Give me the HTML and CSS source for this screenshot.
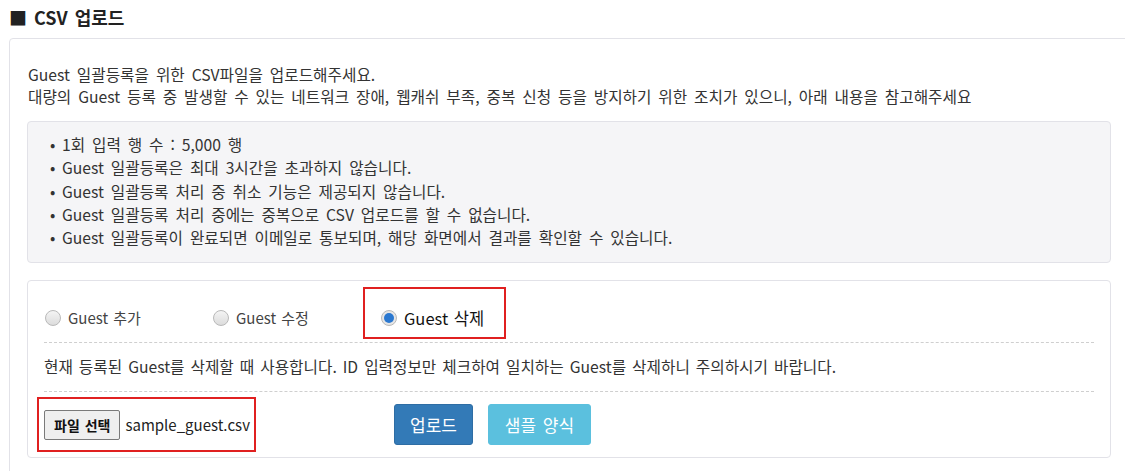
FILE: index.html
```html
<!DOCTYPE html>
<html lang="ko">
<head>
<meta charset="utf-8">
<title>CSV 업로드</title>
<link rel="stylesheet" href="styles.css">
</head>
<body>
<div class="page">
  <h2 class="title">■ CSV 업로드</h2>
  <div class="panel">
    <p class="intro">Guest 일괄등록을 위한 CSV파일을 업로드해주세요.<br>대량의 Guest 등록 중 발생할 수 있는 네트워크 장애, 웹캐쉬 부족, 중복 신청 등을 방지하기 위한 조치가 있으니, 아래 내용을 참고해주세요</p>
    <ul class="notice">
      <li>1회 입력 행 수 : 5,000 행</li>
      <li>Guest 일괄등록은 최대 3시간을 초과하지 않습니다.</li>
      <li>Guest 일괄등록 처리 중 취소 기능은 제공되지 않습니다.</li>
      <li>Guest 일괄등록 처리 중에는 중복으로 CSV 업로드를 할 수 없습니다.</li>
      <li>Guest 일괄등록이 완료되면 이메일로 통보되며, 해당 화면에서 결과를 확인할 수 있습니다.</li>
    </ul>
    <div class="form-box">
      <div class="radio-row">
        <label class="option"><span class="radio"></span>Guest 추가</label>
        <label class="option"><span class="radio"></span>Guest 수정</label>
        <label class="option selected marked"><span class="radio checked"></span>Guest 삭제</label>
      </div>
      <div class="desc">현재 등록된 Guest를 삭제할 때 사용합니다. ID 입력정보만 체크하여 일치하는 Guest를 삭제하니 주의하시기 바랍니다.</div>
      <div class="action-row">
        <div class="file-group">
          <div class="file marked"><span class="file-btn">파일 선택</span><span class="file-name">sample_guest.csv</span></div>
        </div>
        <button class="btn btn-primary">업로드</button>
        <button class="btn btn-info">샘플 양식</button>
      </div>
    </div>
  </div>
</div>
</body>
</html>
```

FILE: styles.css
```css
html, body {
  margin: 0;
  padding: 0;
  background: #fff;
  overflow: hidden;
}
body {
  font-family: "Noto Sans CJK KR", "Noto Sans", sans-serif;
  color: #333;
  font-size: 15.7px;
  word-spacing: 2.5px;
}
.page {
  width: 1125px;
  height: 471px;
  padding-left: 9px;
  box-sizing: border-box;
  overflow: hidden;
}
.title {
  margin: 0;
  height: 38px;
  line-height: 34px;
  font-size: 18px;
  font-weight: bold;
  color: #222;
  word-spacing: 2px;
}
.panel {
  width: 1120px;
  border: 1px solid #e2e2e8;
  border-radius: 4px;
  padding: 25px 18px 20px 17px;
  box-sizing: border-box;
  min-height: 460px;
}
.intro {
  margin: 0 0 13px 1px;
  line-height: 22px;
}
.notice {
  list-style: none;
  margin: 0;
  padding: 11px 0 13px 22px;
  background: #f5f5f7;
  border: 1px solid #e2e2e8;
  border-radius: 4px;
  line-height: 23.3px;
  width: 1084px;
  box-sizing: border-box;
}
.notice li::before {
  content: "•";
  display: inline-block;
  width: 12px;
}
.form-box {
  margin-top: 17px;
  width: 1084px;
  box-sizing: border-box;
  border: 1px solid #e2e2e8;
  border-radius: 4px;
  padding: 0 16px;
}
.radio-row {
  display: flex;
  align-items: center;
  padding: 26px 0 13px 1px;
  height: 22px;
  border-bottom: 1px dashed #cfcfcf;
}
.option {
  flex: none;
  width: 168px;
  display: flex;
  align-items: center;
  line-height: 22px;
  font-size: 15px;
  word-spacing: 1px;
  color: #444;
  position: relative;
}
.option.selected {
  width: auto;
  color: #111;
  font-size: 16.5px;
  word-spacing: 1px;
}
.option.marked::after {
  content: "";
  position: absolute;
  left: -18px;
  top: -20px;
  right: -22px;
  bottom: -10px;
  border: 2px solid #e02020;
}
.radio {
  width: 14px;
  height: 14px;
  border-radius: 50%;
  border: 1px solid #b9b9b9;
  background: linear-gradient(#f4f4f4, #dcdcdc);
  margin-right: 7px;
  box-sizing: content-box;
  position: relative;
}
.radio.checked {
  background: #e6e6e6;
}
.radio.checked::after {
  content: "";
  position: absolute;
  left: 2px;
  top: 2px;
  width: 10px;
  height: 10px;
  border-radius: 50%;
  background: #2b78d0;
}
.desc {
  padding: 13px 0;
  line-height: 22px;
  border-bottom: 1px dashed #cfcfcf;
  word-spacing: 1.6px;
  color: #333;
}
.action-row {
  display: flex;
  align-items: center;
  padding: 12px 0;
}
.file-group {
  width: 350px;
  flex: none;
  display: flex;
}
.file {
  display: flex;
  align-items: center;
  position: relative;
}
.file.marked::after {
  content: "";
  position: absolute;
  left: -7px;
  top: -13px;
  right: -6px;
  bottom: -12px;
  border: 2px solid #e02020;
}
.file-btn {
  display: inline-block;
  height: 30px;
  line-height: 28px;
  box-sizing: border-box;
  padding: 0 9px 0 9px;
  border: 1px solid #7a7a7a;
  border-radius: 2px;
  background: #efefef;
  font-size: 14px;
  font-weight: bold;
  word-spacing: 1px;
  color: #111;
}
.file-name {
  margin-left: 5px;
  font-size: 15px;
  word-spacing: 0;
  color: #222;
}
.btn {
  height: 41px;
  border: 1px solid transparent;
  border-radius: 3px;
  color: #fff;
  font-family: inherit;
  font-size: 17px;
  word-spacing: 2px;
  padding: 0 10px;
  margin-right: 15px;
  cursor: pointer;
}
.btn-primary {
  width: 79px;
  background: #337ab7;
  border-color: #2e6da4;
}
.btn-info {
  width: 103px;
  background: #5bc0de;
  border-color: #5bc0de;
}
```
